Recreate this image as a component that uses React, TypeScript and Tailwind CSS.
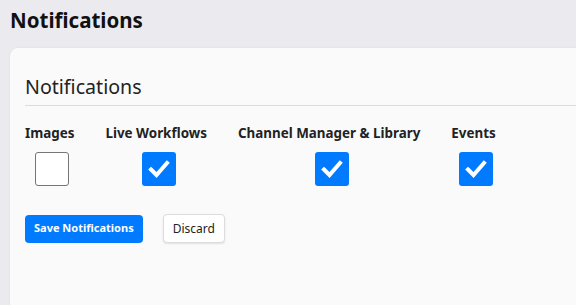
import React from "react";

function Check({ checked }: { checked: boolean }) {
  if (!checked) {
    return <div className="w-[34px] h-[34px] rounded-[3px] border border-[#767676] bg-white" />;
  }
  return (
    <div className="w-[34px] h-[34px] rounded-[3px] bg-[#007bff] flex items-center justify-center">
      <svg width="26" height="26" viewBox="0 0 26 26">
        <path d="M5 13.5 L10.5 19 L21 7" fill="none" stroke="white" strokeWidth="4" strokeLinecap="square" />
      </svg>
    </div>
  );
}

const cols = [
  { label: "Images", checked: false },
  { label: "Live Workflows", checked: true },
  { label: "Channel Manager & Library", checked: true },
  { label: "Events", checked: true },
];

export default function App() {
  return (
    <div className="w-[576px] h-[305px] bg-[#ebebef] overflow-hidden" style={{ fontFamily: '"Noto Sans", sans-serif' }}>
      <h1 className="text-[20.5px] font-bold text-[#111] pl-[10px] pt-[6px] h-[48px] leading-[28px]">Notifications</h1>
      <div className="ml-[10px] bg-[#fafafa] rounded-tl-[8px] h-[257px] shadow-[0_0_2px_rgba(0,0,0,0.08)] pl-[15px] pt-[25px]">
        <h2 className="text-[19.6px] text-[#222] leading-[28px] pb-[4px] border-b border-[#dcdcdc]">Notifications</h2>
        <div className="flex gap-[31px] pt-[18px]">
          {cols.map((c) => (
            <div key={c.label} className="flex flex-col items-center">
              <span className="text-[13.4px] font-bold text-[#222] leading-[18px]">{c.label}</span>
              <div className="mt-[10px] ml-[5px]">
                <Check checked={c.checked} />
              </div>
            </div>
          ))}
        </div>
        <div className="flex gap-[20px] mt-[28px] items-center">
          <button className="h-[28px] px-[9px] rounded-[4px] bg-[#007bff] text-white text-[11px] font-bold">Save Notifications</button>
          <button className="h-[29px] px-[9px] rounded-[4px] bg-white border border-[#dcdcdc] shadow-[0_1px_2px_rgba(0,0,0,0.1)] text-[#222] text-[12px]">Discard</button>
        </div>
      </div>
    </div>
  );
}
